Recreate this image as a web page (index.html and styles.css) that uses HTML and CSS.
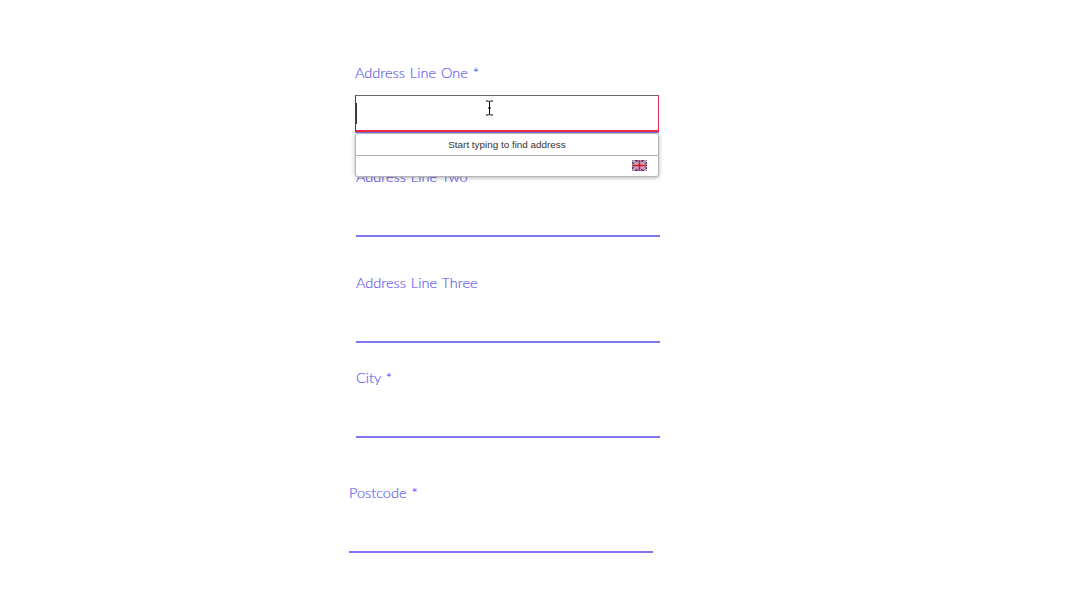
FILE: index.html
```html
<!DOCTYPE html>
<html lang="en">
<head>
    <meta charset="UTF-8">
    <title>Address</title>
    <link rel="stylesheet" href="styles.css">
</head>
<body>
    <form class="address-form">
        <div class="field field-one">
            <label>Address Line One *</label>
            <div class="input focused">
                <span class="caret"></span>
                <svg class="ibeam" width="9" height="16" viewBox="0 0 9 16">
                    <path d="M1 1h2.5L4.5 2l1-1H8M4.5 2v12M3 8h3M1 15h2.5l1-1 1 1H8" fill="none" stroke="#000" stroke-width="1"/>
                </svg>
            </div>
            <div class="finder">
                <div class="finder-hint">Start typing to find address</div>
                <div class="finder-foot">
                    <svg class="flag" width="15" height="11" viewBox="0 0 15 11">
                        <rect width="15" height="11" fill="#2f3470"/>
                        <path d="M0 0l15 11M15 0L0 11" stroke="#dcdae6" stroke-width="2.4"/>
                        <path d="M0 0l15 11M15 0L0 11" stroke="#b92c50" stroke-width="0.8"/>
                        <path d="M7.5 0v11M0 5.5h15" stroke="#dcdae6" stroke-width="3.6"/>
                        <path d="M7.5 0v11M0 5.5h15" stroke="#c2203f" stroke-width="2"/>
                    </svg>
                </div>
            </div>
        </div>
        <div class="field field-two">
            <label>Address Line Two</label>
            <div class="input"></div>
        </div>
        <div class="field field-three">
            <label>Address Line Three</label>
            <div class="input"></div>
        </div>
        <div class="field field-city">
            <label>City *</label>
            <div class="input"></div>
        </div>
        <div class="field field-postcode">
            <label>Postcode *</label>
            <div class="input"></div>
        </div>
    </form>
</body>
</html>
```

FILE: styles.css
```css
html, body {
    height: 100%;
}
body {
    margin: 0;
    background: white;
    font-family: Lato, "Noto Sans", sans-serif;
    overflow: hidden;
}
.address-form {
    width: 304px;
    margin-left: 356px;
    padding-top: 63px;
}
.field {
    position: relative;
}
.field label {
    display: block;
    height: 20px;
    line-height: 20px;
    font-size: 14.5px;
    font-weight: 300;
    word-spacing: 1px;
    color: #6a5ff0;
    -webkit-text-stroke: 0.2px #6a5ff0;
}
.input {
    height: 48px;
    border-bottom: 2px solid #7f76f0;
}
.field-one {
    margin-left: -1px;
    margin-right: 1px;
}
.field-two {
    margin-top: 35px;
}
.field-three {
    margin-top: 36px;
}
.field-city {
    margin-top: 25px;
}
.field-postcode {
    margin-top: 45px;
    margin-left: -7px;
    margin-right: 7px;
}
.field-one .input {
    position: relative;
    box-sizing: border-box;
    height: 37px;
    margin-top: 12px;
    border-width: 1px 1px 2px;
    border-style: solid;
    border-color: #666 #ee2a45 #ee2a45 #444;
    box-shadow: 0 1px 0 #7f76f0;
}
.caret {
    position: absolute;
    left: 0;
    top: 7px;
    width: 1px;
    height: 21px;
    background: #333;
}
.ibeam {
    position: absolute;
    left: 129px;
    top: 4px;
}
.finder {
    position: absolute;
    left: 0;
    top: 70px;
    width: 302px;
    background: white;
    border: 1px solid #b4b4b4;
    border-radius: 3px;
    box-shadow: 0 1px 4px rgba(0,0,0,0.3);
    font-family: "Liberation Sans", Arial, sans-serif;
    z-index: 2;
}
.finder-hint {
    height: 21px;
    line-height: 21px;
    text-align: center;
    font-size: 9.9px;
    color: #333;
    border-bottom: 1px solid #b4b4b4;
}
.finder-foot {
    display: flex;
    justify-content: flex-end;
    align-items: center;
    height: 20px;
    padding-right: 11px;
}
.flag {
    display: block;
    margin-top: -1px;
}
```
